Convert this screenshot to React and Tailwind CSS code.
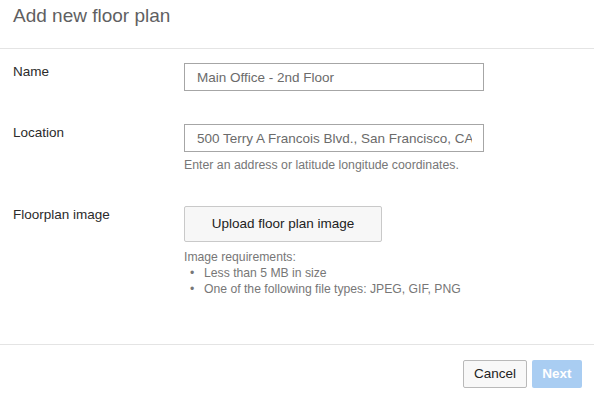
import React from 'react'

const font = { fontFamily: '"Liberation Sans", Arial, sans-serif' }

function Row({ label, children, className = '' }) {
  return (
    <div className={`grid grid-cols-[171px_300px] ${className}`}>
      <div className="text-[13.5px] leading-[18px] text-[#2b2b2b]">{label}</div>
      <div>{children}</div>
    </div>
  )
}

export default function App() {
  return (
    <div className="w-[594px] h-[400px] bg-white flex flex-col overflow-hidden" style={font}>
      <header className="h-[49px] border-b border-[#e4e4e4] px-[13px] pt-[4px] shrink-0">
        <h1 className="text-[19px] leading-6 text-[#5f5f62] font-normal">Add new floor plan</h1>
      </header>

      <main className="flex-1 pl-[13px] pt-[14px]">
        <Row label="Name" className="mb-[33px]">
          <input
            readOnly
            defaultValue="Main Office - 2nd Floor"
            className="w-full h-[28px] border border-[#a6a6a6] pl-3 pr-[11px] text-[13.5px] text-[#6b6b6b] outline-none"
          />
        </Row>

        <Row label="Location" className="mb-[34px]">
          <input
            readOnly
            defaultValue="500 Terry A Francois Blvd., San Francisco, CA"
            className="w-full h-[28px] border border-[#a6a6a6] pl-3 pr-[11px] text-[13.5px] text-[#6b6b6b] outline-none"
          />
          <p className="mt-[6px] text-[12.3px] leading-[14px] text-[#777]">
            Enter an address or latitude longitude coordinates.
          </p>
        </Row>

        <Row label="Floorplan image">
          <button className="w-[198px] h-[36px] border border-[#c9c9c9] rounded-[2px] bg-[#f7f7f7] text-[13.5px] text-[#222]">
            Upload floor plan image
          </button>
          <div className="mt-[8px] text-[12.2px] leading-[15px] text-[#777]">
            <p>Image requirements:</p>
            <ul>
              <li className="flex leading-[16px]">
                <span className="w-[20px] pl-[6px]">•</span>
                <span>Less than 5 MB in size</span>
              </li>
              <li className="flex leading-[16px]">
                <span className="w-[20px] pl-[6px]">•</span>
                <span>One of the following file types: JPEG, GIF, PNG</span>
              </li>
            </ul>
          </div>
        </Row>
      </main>

      <footer className="h-[56px] border-t border-[#e4e4e4] shrink-0 flex justify-end items-start pt-[15px] pr-[12px] gap-[5px]">
        <button className="h-[28px] w-[64px] border border-[#b9b9b9] rounded-[2px] bg-[#f8f8f8] text-[13.5px] text-[#222]">
          Cancel
        </button>
        <button className="h-[28px] w-[50px] rounded-[2px] bg-[#a9cdf2] text-[13.5px] font-bold text-white">
          Next
        </button>
      </footer>
    </div>
  )
}
